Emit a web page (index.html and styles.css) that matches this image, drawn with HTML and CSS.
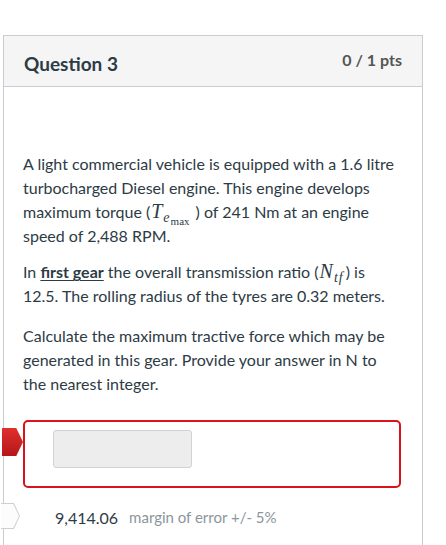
FILE: index.html
```html
<!DOCTYPE html>
<html lang="en">
<head>
  <meta charset="UTF-8" />
  <meta name="viewport" content="width=device-width, initial-scale=1" />
  <title>Question 3</title>
  <link rel="stylesheet" href="styles.css">
</head>
<body>
  <div class="question">
    <div class="question-header">
      <h2 class="question-name">Question 3</h2>
      <span class="question-pts">0 / 1 pts</span>
    </div>
    <div class="question-content">
      <div class="question-text">
        <p>A light commercial vehicle is equipped with a 1.6 litre turbocharged Diesel engine. This engine develops maximum torque (<span class="math">T<span class="sub">e<span class="subsub">max</span></span></span>) of 241 Nm at an engine speed of 2,488 RPM.</p>
        <p>In <strong><u>first gear</u></strong> the overall transmission ratio (<span class="math">N<span class="sub">tf</span></span>) is 12.5. The rolling radius of the tyres are 0.32 meters.</p>
        <p>Calculate the maximum tractive force which may be generated in this gear. Provide your answer in N to the nearest integer.</p>
      </div>

      <div class="answer answer-wrong">
        <span class="flag flag-wrong"></span>
        <input type="text" class="answer-input" aria-label="Your answer" disabled>
      </div>

      <div class="answer answer-correct">
        <span class="flag flag-correct"></span>
        <span class="answer-value">9,414.06</span>
        <span class="answer-margin">margin of error +/- 5%</span>
      </div>
    </div>
  </div>
</body>
</html>
```

FILE: styles.css
```css
/* Reset and base */
* {
  box-sizing: border-box;
  margin: 0;
  padding: 0;
}
body {
  background: #fff;
  color: #2d3b45;
  font-family: Lato, 'Open Sans', sans-serif;
  font-size: 16px;
}
.question {
  width: 420px;
  margin: 35px 0 0 3px;
  border: 1px solid #c7cdd1;
  border-bottom: none;
  min-height: 600px;
}
.question-header {
  display: flex;
  justify-content: space-between;
  align-items: flex-start;
  height: 51px;
  padding: 0 20px;
  background: #f5f5f5;
  border-bottom: 1px solid #c7cdd1;
}
.question-name {
  font-size: 19px;
  font-weight: 700;
  color: #2d3b45;
  line-height: 24px;
  margin-top: 16px;
}
.question-pts {
  font-size: 16px;
  font-weight: 700;
  color: #555;
  line-height: 20px;
  margin-top: 14px;
}
.question-content {
  padding: 65px 0 0 19px;
}
.question-text {
  width: 376px;
}
.question-text p {
  line-height: 24px;
  margin-bottom: 12px;
}
.question-text p:nth-child(2) {
  margin-bottom: 16px;
}
.question-text p:last-child {
  margin-bottom: 0;
}

/* inline math, roughly like MathJax output */
.math {
  line-height: 0;
  padding: 0 2px 0 1px;
  font-family: 'Liberation Serif', 'DejaVu Serif', serif;
  font-style: italic;
  font-size: 20px;
}
.math .sub {
  font-size: 14px;
  vertical-align: -4px;
  padding-left: 1px;
  letter-spacing: 1px;
}
.math .subsub {
  font-style: normal;
  font-size: 11px;
  vertical-align: -3px;
  letter-spacing: 0;
  padding-right: 4px;
}
u {
  text-decoration-thickness: 1px;
  text-underline-offset: 2px;
}

.answer {
  position: relative;
  display: flex;
  align-items: center;
}
.answer-wrong {
  width: 378px;
  margin-top: 24px;
  padding: 8px 28px 18px;
  border: 2px solid #d9121b;
  border-radius: 5px;
}
.answer-input {
  width: 139px;
  height: 38px;
  background: #ededed;
  border: 1px solid #d2d2d2;
  border-radius: 3px;
}
.answer-correct {
  height: 58px;
  padding-left: 32px;
  font-size: 16px;
}
.answer-value {
  color: #2d3b45;
}
.answer-margin {
  margin-left: 11px;
  color: #8b969e;
  font-size: 15px;
}

/* answer flags that sit over the card edge */
.flag {
  position: absolute;
  left: -23px;
  width: 21px;
  height: 28px;
  clip-path: polygon(0 0, 68% 0, 100% 50%, 68% 100%, 0 100%);
}
.flag-wrong {
  top: 6px;
  background: linear-gradient(#e0302d, #b5161a);
}
.flag-correct {
  top: 15px;
  left: -22px;
  width: 19px;
  height: 26px;
  background: #cfcfcf;
}
.flag-correct::after {
  content: '';
  position: absolute;
  inset: 1px 1px 1px 0;
  background: #fcfcfc;
  clip-path: polygon(0 0, 68% 0, 100% 50%, 68% 100%, 0 100%);
}
```
